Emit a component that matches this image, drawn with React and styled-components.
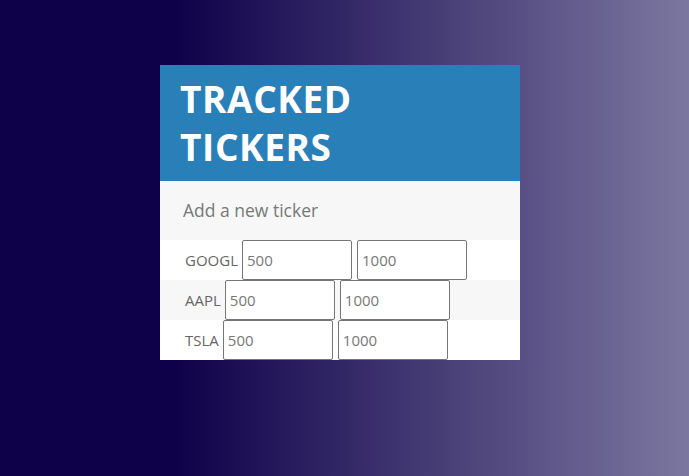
import React from "react";
import styled, { createGlobalStyle } from "styled-components";

const Global = createGlobalStyle`
  html, body { margin: 0; padding: 0; height: 100%; }
  body {
    font-family: "Open Sans", "Noto Sans", sans-serif;
    background: linear-gradient(to right, #0e0049 25%, #7c77a0 100%);
    min-height: 476px;
  }
  #root { min-height: 476px; }
`;

const Page = styled.div`
  display: flex;
  justify-content: center;
  padding: 65px 9px 0 0;
`;

const Card = styled.div`
  width: 360px;
  background: #fff;
`;

const Header = styled.div`
  background: #2980b9;
  padding: 10px 20px 10px 20px;
`;

const Title = styled.h1`
  margin: 0;
  color: #fff;
  font-family: "Open Sans", sans-serif;
  font-weight: 700;
  font-size: 37px;
  line-height: 48px;
  letter-spacing: 0.6px;
  width: 230px;
`;

const NewInput = styled.input`
  display: block;
  box-sizing: border-box;
  width: 100%;
  height: 59px;
  border: none;
  outline: none;
  background: #f7f7f7;
  padding: 0 0 2px 23px;
  font-family: "Open Sans", sans-serif;
  font-size: 17.5px;
  color: #555;
  &::placeholder { color: #777; }
`;

const List = styled.ul`
  list-style: none;
  margin: 0;
  padding: 0;
`;

const Row = styled.li`
  display: flex;
  align-items: center;
  height: 40px;
  padding-left: 25px;
  background: ${(p) => (p.$alt ? "#f7f7f7" : "#fff")};
`;

const Label = styled.span`
  font-size: 15px;
  color: #666;
  margin-right: 4px;
`;

const Field = styled.input`
  box-sizing: border-box;
  width: 110px;
  height: 40px;
  margin-right: 5px;
  border: 1px solid #767676;
  border-radius: 2px;
  background: #fff;
  padding: 0 4px;
  font-family: "Open Sans", sans-serif;
  font-size: 15px;
  color: #777;
  outline: none;
`;

const tickers = ["GOOGL", "AAPL", "TSLA"];

export default function App() {
  return (
    <>
      <Global />
      <Page>
        <Card>
          <Header>
            <Title>TRACKED TICKERS</Title>
          </Header>
          <NewInput placeholder="Add a new ticker" />
          <List>
            {tickers.map((t, i) => (
              <Row key={t} $alt={i % 2 === 1}>
                <Label>{t}</Label>
                <Field defaultValue="500" />
                <Field defaultValue="1000" />
              </Row>
            ))}
          </List>
        </Card>
      </Page>
    </>
  );
}
